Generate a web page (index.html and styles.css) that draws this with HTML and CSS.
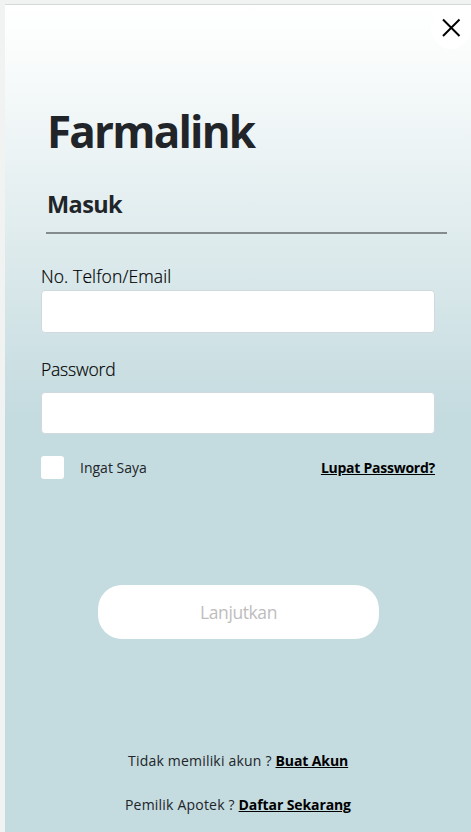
FILE: index.html
```html
<!DOCTYPE html>
<html lang="id">
<head>
<meta charset="utf-8">
<title>Farmalink</title>
<link rel="stylesheet" href="styles.css">
</head>
<body>
<main class="screen">
  <button class="close" aria-label="Tutup"><svg viewBox="0 0 20 20" width="20" height="20"><path d="M2 1.5 18.5 18M18.5 1.5 2 18"/></svg></button>
  <h1 class="brand">Farmalink</h1>
  <h2 class="heading">Masuk</h2>
  <form class="form">
    <label class="label" for="user">No. Telfon/Email</label>
    <input class="input" id="user" type="text">
    <label class="label label-pass" for="pass">Password</label>
    <input class="input input-pass" id="pass" type="password">
    <div class="options">
      <label class="remember"><span class="box"></span><span>Ingat Saya</span></label>
      <a class="link forgot">Lupat Password?</a>
    </div>
    <button class="submit" type="button">Lanjutkan</button>
  </form>
  <footer class="footer">
    <p class="line line-a">Tidak memiliki akun ? <a class="link">Buat Akun</a></p>
    <p class="line line-b">Pemilik Apotek ? <a class="link">Daftar Sekarang</a></p>
  </footer>
</main>
</body>
</html>
```

FILE: styles.css
```css
* { box-sizing: border-box; }
body { margin: 0; height: 832px; overflow: hidden; background: #f1f2f2; font-family: "Open Sans", "Noto Sans", sans-serif; color: #212529; }
.screen { position: relative; margin: 4px 0 0 5px; height: 828px; padding: 98px 24px 0 36px; border-top: 1px solid #d5d9d9; background: linear-gradient(#fff, #fafcfc 6%, #c4dbdf 50%); }
.close { position: absolute; top: 2px; right: 0; width: 40px; height: 42px; padding: 0; border: 0; border-radius: 50%; background: #fff; display: grid; place-items: center; }
.close svg { fill: none; stroke: #000; stroke-width: 2; }
.brand { margin: 0 0 0 6px; font-size: 44px; line-height: 56px; letter-spacing: -1.8px; color: #212529; }
.heading { margin: 25px 0 0 5px; padding-left: 1px; height: 50px; font-size: 23.5px; line-height: 40px; letter-spacing: -0.6px; border-bottom: 2px solid #858c8e; }
.form { margin-top: 29px; width: 394px; }
.label { display: block; padding-bottom: 1px; font-size: 17.5px; font-weight: 300; line-height: 26px; color: #000; letter-spacing: 0.12px; -webkit-text-stroke: 0.2px #000; }
.input { display: block; width: 394px; height: 43px; border: 1px solid #d0dade; border-radius: 4px; background: #fff; }
.label-pass { margin-top: 23px; letter-spacing: -0.2px; }
.input-pass { height: 42px; margin-top: 9px; }
.options { display: flex; justify-content: space-between; align-items: flex-start; margin-top: 22px; height: 24px; font-size: 14px; line-height: 23px; }
.remember { display: flex; align-items: center; gap: 16px; }
.box { width: 23px; height: 23px; border-radius: 3px; background: #fff; }
.link { color: #000; font-weight: 700; text-decoration: underline; letter-spacing: -0.1px; }
.forgot { letter-spacing: -0.25px; }
.submit { display: block; width: 281px; height: 54px; margin: 105px 0 0 57px; border: 0; border-radius: 24px; background: #fff; color: #bdbdbd; font: 17.5px "Open Sans", sans-serif; letter-spacing: -0.4px; }
.footer { margin-top: 110px; font-size: 14px; letter-spacing: 0.2px; }
.line { margin: 0 0 20px; line-height: 24px; white-space: nowrap; }
.line-a { padding-left: 87px; }
.line-b { padding-left: 84px; }
```
